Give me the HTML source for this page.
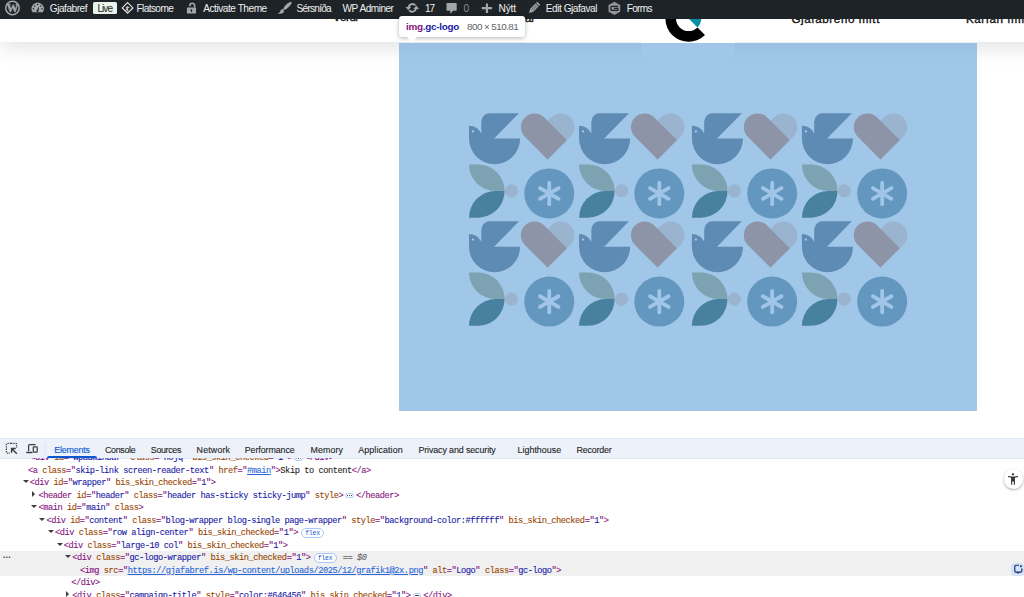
<!DOCTYPE html>
<html lang="is">
<head>
<meta charset="utf-8">
<title>Gjafabref</title>
<style>
html,body{margin:0;padding:0;}
body{width:1024px;height:597px;overflow:hidden;position:relative;background:#fff;font-family:"Liberation Sans",sans-serif;}
.abs{position:absolute;}
/* ---------- site header ---------- */
#hdr{position:absolute;left:0;top:0;width:1100px;height:42.3px;background:#fff;box-shadow:0 4px 22px 0 rgba(0,0,0,.125);z-index:2;}
#hdr .nav{position:absolute;top:10.2px;font-size:11.6px;line-height:14px;color:#111;white-space:nowrap;font-weight:400;-webkit-text-stroke:0.35px #111;}
#logobg{position:absolute;left:641px;top:30px;width:94px;height:29px;background:#fff;border-radius:0 0 7px 7px;z-index:2;}
/* ---------- highlighted image ---------- */
#hl{position:absolute;left:399px;top:42.5px;width:578px;height:368.5px;background:rgba(111,168,220,.66);z-index:3;}
#hl svg{position:absolute;left:0;top:0;}
/* ---------- wp admin bar ---------- */
#wpbar{position:absolute;left:0;top:0;width:1024px;height:18.7px;background:#1d2327;z-index:5;color:#f0f0f1;font-size:10.1px;line-height:12px;}
#wpbar span{position:absolute;top:2.7px;white-space:nowrap;}
#wpbar svg{position:absolute;}
/* ---------- tooltip ---------- */
#tip{position:absolute;left:399.1px;top:15.9px;width:125.6px;height:21.3px;background:#fff;border-radius:3px;z-index:6;box-shadow:0 1px 4px rgba(0,0,0,.3);}
#tip:after{content:"";position:absolute;left:7.8px;top:21px;border-left:5.8px solid transparent;border-right:5.8px solid transparent;border-top:6.4px solid #fff;}
#tip span{position:absolute;top:5.5px;font-size:9.9px;line-height:12px;white-space:nowrap;}
/* ---------- devtools ---------- */
#dt{position:absolute;left:0;top:438px;width:1024px;height:159px;background:#fff;z-index:7;}
#dtbar{position:absolute;left:0;top:0;width:1024px;height:20.5px;background:#edf2fa;border-top:1px solid #e3eaf7;border-bottom:1px solid #e0e8f6;box-sizing:border-box;}
#dtbar span{position:absolute;top:4.6px;font-size:8.9px;line-height:12px;color:#1f1f1f;white-space:nowrap;-webkit-text-stroke:0.12px;}
#tree{position:absolute;left:0;top:20.5px;width:1024px;height:138.5px;overflow:hidden;font-family:"Liberation Mono",monospace;font-size:8.7px;letter-spacing:-0.451px;line-height:12.5px;color:#1f1f1f;-webkit-text-stroke:0.1px;}
#tree .ln{position:absolute;left:0;height:12.5px;white-space:pre;}
.t{color:#881280}.n{color:#994500}.v{color:#1a1aa6}.g{color:#5f6368}
#tree{top:20px;height:139px}
#sel{position:absolute;left:0;top:92.5px;width:1024px;height:25.3px;background:#f0f0f0;}
.ad{position:absolute;left:-7.2px;top:3.3px;width:0;height:0;border-left:3px solid transparent;border-right:3px solid transparent;border-top:3.7px solid #3c3c3c;}
.ar{position:absolute;left:-6.3px;top:1.7px;width:0;height:0;border-top:3px solid transparent;border-bottom:3px solid transparent;border-left:3.7px solid #3c3c3c;}
.lk{text-decoration:underline;color:#2a66d9;}
.ell{display:inline-block;width:8.5px;height:5.6px;margin:0 2.1px;border:0.7px solid #a8c7fa;border-radius:3px;vertical-align:-0.5px;box-sizing:border-box;background:radial-gradient(circle at 25% 50%,#474747 0,#474747 .5px,transparent .6px),radial-gradient(circle at 50% 50%,#474747 0,#474747 .5px,transparent .6px),radial-gradient(circle at 75% 50%,#474747 0,#474747 .5px,transparent .6px) #fff;}
.flex{display:inline-block;font-family:"Liberation Mono",monospace;font-size:6.4px;letter-spacing:-0.2px;-webkit-text-stroke:0;line-height:10.4px;height:9.9px;width:22.9px;text-align:center;margin-left:3.2px;border:0.8px solid #a8c7fa;border-radius:5px;color:#0b57d0;vertical-align:top;margin-top:0.8px;box-sizing:border-box;background:#fff;}
.eq{color:#5f6368;font-style:italic;margin-left:1.4px;}
.dots{position:absolute;left:2.5px;top:91.3px;font-size:8.5px;font-weight:700;color:#444;font-family:"Liberation Sans",sans-serif;}
#a11y{position:absolute;left:1003.5px;top:11.4px;width:19.4px;height:19.4px;border-radius:50%;background:#fff;box-shadow:0 1px 2.5px rgba(0,0,0,.35);}
#a11y svg{position:absolute;left:-.5px;top:0;}
#aibtn{position:absolute;left:1011.6px;top:106.3px;width:11.8px;height:11.1px;border-radius:2.5px;background:#d3e3fd;box-shadow:0 0 0 .5px #b9cdf3;}
#aibtn svg{position:absolute;left:0;top:0;}
</style>
</head>
<body>

<div id="hdr">
  <span class="nav" style="letter-spacing:-0.512px;left:332.9px;top:10.0px">Vörur</span>
  <span class="nav" style="letter-spacing:-0.191px;left:492.7px;top:11.4px">Gjafaval</span>
  <span class="nav" style="letter-spacing:0.624px;left:791.4px;top:11.8px">Gjafabréfið mitt</span>
  <span class="nav" style="letter-spacing:0.578px;left:966px;top:11.8px">Karfan mín</span>
</div>
<div id="logobg"></div>
  <svg class="abs" style="left:660px;top:0;z-index:2" width="60" height="44" viewBox="660 0 60 44">
    <path fill="#000" d="M705,34.9 A23.2,23.2 0 1 1 705,2.1 L697.5,9.6 A12.6,12.6 0 1 0 697.5,27.4 Z"/>
    <path fill="#0a8da6" d="M688.6,18.5 L697.5,27.4 A12.6,12.6 0 0 0 697.5,9.6 Z"/>
  </svg>

<div id="hl">
<svg width="578" height="368.5" viewBox="399 42.5 578 368.5">
<defs>
<g id="tile">
<path fill="#5d8bb4" d="M0,12.6 A14,14 0 0 1 12.3,20.4 V8.5 A8.5,8.5 0 0 1 20.8,0 H49.9 L25.1,25.4 H51.1 A25.55,25.55 0 0 1 0,25.4 Z"/>
<circle cx="4" cy="18.2" r="1.15" fill="#a9cbe9"/>
<g transform="translate(91.7,13.9) rotate(135)"><path fill="#9ab4cf" d="M0,-13.7 H32 V13.7 H0 A13.7,13.7 0 0 1 0,-13.7 Z"/></g>
<g transform="translate(65.6,13.9) rotate(45)"><path fill="#8d94a8" d="M0,-13.7 H32 V13.7 H0 A13.7,13.7 0 0 1 0,-13.7 Z"/></g>
<path fill="#7da2b1" d="M0,51.2 H9.05 A26.55,26.55 0 0 1 35.6,77.75 H26.55 A26.55,26.55 0 0 1 0,51.2 Z"/>
<path fill="#48819f" d="M0,104.5 H9.05 A26.75,26.75 0 0 0 35.6,77.75 H26.55 A26.75,26.75 0 0 0 0,104.5 Z"/>
<circle cx="42.5" cy="77.7" r="6.6" fill="#9ab4cf"/>
<circle cx="80.26" cy="80.26" r="25" fill="#6497c0"/>
<g stroke="#a0c5e8" stroke-width="3.8" stroke-linecap="round" transform="translate(80.26,80.26)">
<line x1="0" y1="-10.7" x2="0" y2="10.7"/>
<line x1="-9.27" y1="-5.35" x2="9.27" y2="5.35"/>
<line x1="-9.27" y1="5.35" x2="9.27" y2="-5.35"/>
</g>
</g>
</defs>
<use href="#tile" x="469.0" y="112.7"/>
<use href="#tile" x="579.05" y="112.7"/>
<use href="#tile" x="691.9" y="112.7"/>
<use href="#tile" x="801.9" y="112.7"/>
<use href="#tile" x="469.0" y="220.85"/>
<use href="#tile" x="579.05" y="220.85"/>
<use href="#tile" x="691.9" y="220.85"/>
<use href="#tile" x="801.9" y="220.85"/>
</svg>
</div>

<div id="wpbar">
<span class="wt" style="letter-spacing:-0.465px;left:49.75px;color:#f0f0f1">Gjafabref</span>
<span class="wt" style="letter-spacing:-0.583px;left:136.4px;color:#f0f0f1">Flatsome</span>
<span class="wt" style="letter-spacing:-0.461px;left:203.25px;color:#f0f0f1">Activate Theme</span>
<span class="wt" style="letter-spacing:-0.751px;left:296.6px;color:#f0f0f1">Sérsníða</span>
<span class="wt" style="letter-spacing:-0.502px;left:342.6px;color:#f0f0f1">WP Adminer</span>
<span class="wt" style="letter-spacing:-1.167px;left:425px;color:#f0f0f1">17</span>
<span class="wt" style="letter-spacing:-0.725px;left:463.6px;color:#8c8f94">0</span>
<span class="wt" style="letter-spacing:-0.113px;left:498.5px;color:#f0f0f1">Nýtt</span>
<span class="wt" style="letter-spacing:-0.460px;left:545.75px;color:#f0f0f1">Edit Gjafaval</span>
<span class="wt" style="letter-spacing:-0.722px;left:626.75px;color:#f0f0f1">Forms</span>
<span id="live" style="left:92.5px;top:1.5px;width:24.4px;height:12.5px;background:#e9f3ea;border-radius:1.5px;"></span><span class="wt" style="letter-spacing:-1.008px;left:97.5px;color:#1d2327">Live</span>
<svg width="1024" height="19" viewBox="0 0 1024 19" style="left:0;top:0">
<!-- wp logo -->
<circle cx="12.45" cy="8" r="6.75" fill="none" stroke="#a2a7ab" stroke-width="1.5"/>
<text x="12.45" y="12" font-family="'Liberation Serif',serif" font-weight="700" font-size="12" text-anchor="middle" fill="#a2a7ab" stroke="#a2a7ab" stroke-width=".45">W</text>
<!-- dashboard -->
<path fill="#a2a7ab" d="M32.6,12.3 A6.1,6.1 0 1 1 42.8,12.3 Z"/>
<g fill="#1d2327"><circle cx="37.7" cy="4.6" r=".75"/><circle cx="34.6" cy="5.9" r=".75"/><circle cx="40.8" cy="5.9" r=".75"/><circle cx="33.4" cy="8.8" r=".75"/><circle cx="42" cy="8.8" r=".75"/><path d="M36.4,11.2 L39.2,6.2 L38.4,11.6 A1.1,1.1 0 0 1 36.4,11.2 Z"/></g>
<!-- flatsome -->
<path fill="none" stroke="#e6e7e8" stroke-width="1.15" d="M127.6,2.6 L132.9,7.9 L127.6,13.2 L122.3,7.9 Z"/>
<path fill="#e6e7e8" d="M125.3,8 L127.6,5.9 L129.9,8 L128.6,8 L127.6,9.3 L128.8,10.4 L127.6,11.6 L125.6,9.6 L126.6,8 Z" opacity=".85"/>
<!-- lock -->
<rect x="186.9" y="7.5" width="9.1" height="6.1" rx=".6" fill="#a2a7ab"/>
<path fill="none" stroke="#a2a7ab" stroke-width="1.6" d="M194.6,7.6 V5.6 A2.35,2.35 0 0 0 189.9,5.6 V6.2"/>
<circle cx="191.4" cy="10.2" r=".9" fill="#1d2327"/><rect x="191" y="10.4" width=".8" height="1.8" fill="#1d2327"/>
<!-- brush -->
<ellipse cx="287.5" cy="5.8" rx="5.6" ry="1.75" transform="rotate(-44 287.5 5.8)" fill="#a2a7ab"/>
<path fill="#a2a7ab" d="M282.4,9.1 L284.2,10.9 Q284,13.9 277.6,13.8 Q280.3,12.6 280.6,10.6 Q281,9.2 282.4,9.1 Z"/>
<!-- update -->
<g fill="none" stroke="#a2a7ab" stroke-width="2">
<path d="M408.6,7.2 A3.9,3.9 0 0 1 415.4,5.4"/>
<path d="M416,8.6 A3.9,3.9 0 0 1 409.2,10.4"/>
</g>
<path fill="#a2a7ab" d="M405.5,6.9 L411.2,6.9 L408.3,10.2 Z"/>
<path fill="#a2a7ab" d="M419.1,8.9 L413.4,8.9 L416.3,5.6 Z"/>
<!-- comment -->
<path fill="#a2a7ab" d="M447.3,3.1 H455.9 A.8,.8 0 0 1 456.7,3.9 V10 A.8,.8 0 0 1 455.9,10.8 H453.2 L450.3,14 V10.8 H447.3 A.8,.8 0 0 1 446.5,10 V3.9 A.8,.8 0 0 1 447.3,3.1 Z"/>
<!-- plus -->
<path fill="#a2a7ab" d="M485.85,3.4 H488.05 V7.1 H492.1 V9.3 H488.05 V13 H485.85 V9.3 H481.8 V7.1 H485.85 Z"/>
<!-- pencil -->
<g transform="rotate(45 534.1 7.85)" fill="#a2a7ab">
<path d="M532,1.4 H536.2 V3 H532 Z"/>
<path d="M532,3.7 H536.2 V11.2 L534.1,15 L532,11.2 Z"/>
<g stroke="#1d2327" stroke-width=".45"><line x1="533.4" y1="4.3" x2="533.4" y2="10.8"/><line x1="534.8" y1="4.3" x2="534.8" y2="10.8"/></g>
</g>
<!-- forms -->
<path fill="#929497" d="M614.35,1.75 L620.2,5 V11.65 L614.35,14.9 L608.5,11.65 V5 Z"/>
<path fill="none" stroke="#1d2327" stroke-width="1.25" d="M618,6.3 H611.9 A1,1 0 0 0 610.9,7.3 V9.4 A1,1 0 0 0 611.9,10.4 H617.8 V8.4 H614"/>
</svg>
</div>

<div id="tip"><span style="letter-spacing:-0.270px;left:7px;font-weight:700;color:#881280">img<span style="position:static;color:#1a1aa6">.gc-logo</span></span><span style="letter-spacing:-0.578px;left:68px;color:#5f6368">800 × 510.81</span></div>

<div id="dt">
  <div id="dtbar">
<svg class="abs" style="left:0;top:0" width="50" height="20" viewBox="0 438.9 50 20">
<g fill="none" stroke="#3f3f3f" stroke-width="1.25">
<path d="M11,443.3 H7.4 A1,1 0 0 0 6.4,444.3 V452 A1,1 0 0 0 7.4,453 H10" stroke-dasharray="1.3 1"/>
<path d="M11,443.3 H15.6 A1,1 0 0 1 16.6,444.3 V448" stroke-dasharray="1.3 1"/>
<path d="M11.6,448.4 L16.8,453.6 M11.6,452.6 V448.4 H15.8" stroke-width="1.5"/>
<path d="M28.6,451.2 V445.4 A1,1 0 0 1 29.6,444.4 H35.6"/>
<rect x="33.3" y="446.7" width="3.9" height="5.4" rx=".6"/>
<path d="M26.2,452.4 H32.4" stroke-width="1.5"/>
</g>
<line x1="45.3" y1="442" x2="45.3" y2="454.5" stroke="#d3e3fd" stroke-width="1"/>
</svg>
<span style="letter-spacing:-0.188px;left:54.3px;color:#0b57d0">Elements</span>
<span style="letter-spacing:-0.295px;left:104.9px">Console</span>
<span style="letter-spacing:-0.338px;left:150.8px">Sources</span>
<span style="letter-spacing:0.148px;left:196.6px">Network</span>
<span style="letter-spacing:-0.092px;left:244.8px">Performance</span>
<span style="letter-spacing:0.090px;left:310.5px">Memory</span>
<span style="letter-spacing:0.107px;left:358.2px">Application</span>
<span style="letter-spacing:-0.106px;left:418.4px">Privacy and security</span>
<span style="letter-spacing:0.006px;left:517.6px">Lighthouse</span>
<span style="letter-spacing:-0.152px;left:576.4px">Recorder</span>
<div class="abs" style="left:46.9px;top:17px;width:50.1px;height:2.2px;background:#0b57d0;border-radius:2px 2px 0 0"></div>
</div>
  <div id="tree">
<div id="sel"></div>
<div class="ln" style="left:30.3px;top:-5.9px"><i class="ad"></i><span class="t">&lt;div</span> <span class="n">id</span><span class="t">=&quot;</span><span class="v">wpadminbar</span><span class="t">&quot;</span> <span class="n">class</span><span class="t">=&quot;</span><span class="v">nojq</span><span class="t">&quot;</span> <span class="n">bis_skin_checked</span><span class="t">=&quot;</span><span class="v">1</span><span class="t">&quot;</span><span class="t">&gt;</span><span class="ell"></span><span class="t">&lt;/div&gt;</span></div>
<div class="ln" style="left:27.9px;top:6.6px"><span class="t">&lt;a</span> <span class="n">class</span><span class="t">=&quot;</span><span class="v">skip-link screen-reader-text</span><span class="t">&quot;</span> <span class="n">href</span><span class="t">=&quot;</span><span class="v lk">#main</span><span class="t">&quot;</span><span class="t">&gt;</span>Skip to content<span class="t">&lt;/a&gt;</span></div>
<div class="ln" style="left:29.7px;top:19.1px"><i class="ad"></i><span class="t">&lt;div</span> <span class="n">id</span><span class="t">=&quot;</span><span class="v">wrapper</span><span class="t">&quot;</span> <span class="n">bis_skin_checked</span><span class="t">=&quot;</span><span class="v">1</span><span class="t">&quot;</span><span class="t">&gt;</span></div>
<div class="ln" style="left:38.5px;top:31.6px"><i class="ar"></i><span class="t">&lt;header</span> <span class="n">id</span><span class="t">=&quot;</span><span class="v">header</span><span class="t">&quot;</span> <span class="n">class</span><span class="t">=&quot;</span><span class="v">header has-sticky sticky-jump</span><span class="t">&quot;</span> <span class="n">style</span><span class="t">&gt;</span><span class="ell"></span><span class="t">&lt;/header&gt;</span></div>
<div class="ln" style="left:38.5px;top:44.1px"><i class="ad"></i><span class="t">&lt;main</span> <span class="n">id</span><span class="t">=&quot;</span><span class="v">main</span><span class="t">&quot;</span> <span class="n">class</span><span class="t">&gt;</span></div>
<div class="ln" style="left:46.4px;top:56.6px"><i class="ad"></i><span class="t">&lt;div</span> <span class="n">id</span><span class="t">=&quot;</span><span class="v">content</span><span class="t">&quot;</span> <span class="n">class</span><span class="t">=&quot;</span><span class="v">blog-wrapper blog-single page-wrapper</span><span class="t">&quot;</span> <span class="n">style</span><span class="t">=&quot;</span><span class="v">background-color:#ffffff</span><span class="t">&quot;</span> <span class="n">bis_skin_checked</span><span class="t">=&quot;</span><span class="v">1</span><span class="t">&quot;</span><span class="t">&gt;</span></div>
<div class="ln" style="left:55.0px;top:69.1px"><i class="ad"></i><span class="t">&lt;div</span> <span class="n">class</span><span class="t">=&quot;</span><span class="v">row align-center</span><span class="t">&quot;</span> <span class="n">bis_skin_checked</span><span class="t">=&quot;</span><span class="v">1</span><span class="t">&quot;</span><span class="t">&gt;</span><span class="flex">flex</span></div>
<div class="ln" style="left:63.7px;top:81.6px"><i class="ad"></i><span class="t">&lt;div</span> <span class="n">class</span><span class="t">=&quot;</span><span class="v">large-10 col</span><span class="t">&quot;</span> <span class="n">bis_skin_checked</span><span class="t">=&quot;</span><span class="v">1</span><span class="t">&quot;</span><span class="t">&gt;</span></div>
<div class="ln" style="left:72.3px;top:94.1px"><i class="ad"></i><span class="t">&lt;div</span> <span class="n">class</span><span class="t">=&quot;</span><span class="v">gc-logo-wrapper</span><span class="t">&quot;</span> <span class="n">bis_skin_checked</span><span class="t">=&quot;</span><span class="v">1</span><span class="t">&quot;</span><span class="t">&gt;</span><span class="flex">flex</span><span class="eq"> == $0</span></div>
<div class="ln" style="left:80.0px;top:106.6px"><span class="t">&lt;img</span> <span class="n">src</span><span class="t">=&quot;</span><span class="v lk">https://gjafabref.is/wp-content/uploads/2025/12/grafik1@2x.png</span><span class="t">&quot;</span> <span class="n">alt</span><span class="t">=&quot;</span><span class="v">Logo</span><span class="t">&quot;</span> <span class="n">class</span><span class="t">=&quot;</span><span class="v">gc-logo</span><span class="t">&quot;</span><span class="t">&gt;</span></div>
<div class="ln" style="left:71.3px;top:119.1px"><span class="t">&lt;/div&gt;</span></div>
<div class="ln" style="left:72.3px;top:131.6px"><i class="ar"></i><span class="t">&lt;div</span> <span class="n">class</span><span class="t">=&quot;</span><span class="v">campaign-title</span><span class="t">&quot;</span> <span class="n">style</span><span class="t">=&quot;</span><span class="v">color:#646456</span><span class="t">&quot;</span> <span class="n">bis_skin_checked</span><span class="t">=&quot;</span><span class="v">1</span><span class="t">&quot;</span><span class="t">&gt;</span><span class="ell"></span><span class="t">&lt;/div&gt;</span></div>
<div id="a11y"><svg width="20" height="20" viewBox="1003 469 20 20"><g fill="#333"><circle cx="1012.95" cy="474.3" r="1.15"/><path d="M1008.1,475.9 L1011.6,476.5 H1014.3 L1017.9,475.9 L1018.1,477 L1014.9,477.8 V484.8 H1013.8 V481.4 H1012.2 V484.8 H1011.1 V477.8 L1007.9,477 Z"/></g></svg></div>
<div id="aibtn"><svg width="12" height="11" viewBox="1011.6 564.3 12 11"><path fill="none" stroke="#1a2b5e" stroke-width="1.15" d="M1018.6,565.5 H1015.4 A1,1 0 0 0 1014.4,566.5 V571.4 A1,1 0 0 0 1015.4,572.4 H1020.4 A1,1 0 0 0 1021.4,571.4 V568.8"/><path fill="#1a2b5e" d="M1016,572.6 H1019.2 L1017.6,574.3 Z"/><circle cx="1020.5" cy="566.5" r="1.05" fill="#1a2b5e"/></svg></div>
<span class="dots">…</span>
</div>
</div>

</body>
</html>
